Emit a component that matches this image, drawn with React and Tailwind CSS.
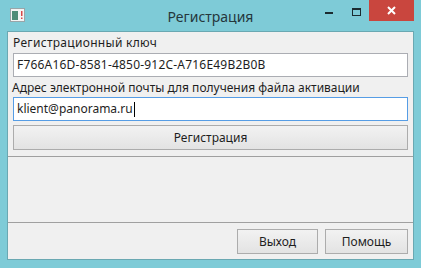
import React from 'react';

const font = { fontFamily: '"Noto Sans", "DejaVu Sans", sans-serif' };

const WinButton = ({ children, className = '' }) => (
  <button
    className={`h-[25px] border border-[#acacac] bg-gradient-to-b from-[#f2f2f2] to-[#e3e3e3] text-[12px] text-[#1e1e1e] ${className}`}
  >
    {children}
  </button>
);

export default function App() {
  return (
    <div className="w-[421px] h-[268px] bg-[#7ecbd7] flex flex-col" style={font}>
      {/* Заголовок окна */}
      <div className="h-[31px] flex items-start relative">
        <svg className="absolute left-[10px] top-[8px]" width="15" height="14" viewBox="0 0 15 14">
          <rect x="0.5" y="0.5" width="14" height="13" fill="#f4f4f4" stroke="#9aa5a8" />
          <rect x="2" y="3" width="6" height="9" fill="#4f8c78" />
          <rect x="11" y="3" width="1.5" height="5" fill="#d84848" />
          <rect x="11" y="9.5" width="1.5" height="1.5" fill="#d84848" />
        </svg>
        <div className="absolute left-0 right-0 top-[6px] text-center text-[14px] text-[#25373c]">Регистрация</div>
        <div className="absolute left-[325px] top-[12px] w-[8px] h-[2px] bg-[#1b2b30]" />
        <div className="absolute left-[352px] top-[8px] w-[9px] h-[8px] border border-[#1b2b30] border-t-2" />
        <div className="absolute left-[369px] top-0 w-[45px] h-[21px] bg-[#c9463e] flex items-center justify-center">
          <svg width="9" height="9" viewBox="0 0 9 9">
            <path d="M1 1 L8 8 M8 1 L1 8" stroke="#fff" strokeWidth="2" />
          </svg>
        </div>
      </div>

      {/* Клиентская область */}
      <div className="flex-1 ml-[7px] mr-[7px] mb-[8px] border border-[#6aa8b2] bg-[#f0f0f0] flex flex-col">
        <div className="pl-[4px] pr-[5px] pt-[3px] flex flex-col">
          <div className="text-[12px] leading-[16px] text-[#1e1e1e] pl-[1px] tracking-[0.3px]">Регистрационный ключ</div>
          <div className="mt-[2px] ml-[1px] h-[24px] bg-white border border-[#abadb3] flex items-center px-[3px] text-[12px] text-[#1e1e1e] tracking-[0.2px]">
            F766A16D-8581-4850-912C-A716E49B2B0B
          </div>
          <div className="mt-[3px] text-[12px] leading-[16px] text-[#1e1e1e]">Адрес электронной почты для получения файла активации</div>
          <div className="mt-[1px] ml-[1px] h-[24px] bg-white border border-[#569de5] flex items-center px-[3px] text-[12px] text-[#1e1e1e]">
            klient@panorama.ru<span className="w-[1px] h-[15px] bg-black ml-[1px]" />
          </div>
          <WinButton className="mt-[4px] ml-[1px] h-[24px]">Регистрация</WinButton>
        </div>
        <div className="mt-[6px] border-t border-[#a0a0a0] flex-1" />
        <div className="h-[37px] border-t border-[#a0a0a0] bg-[#f0f0f0] flex justify-end items-start gap-[7px] pt-[6px] pr-[5px]">
          <WinButton className="w-[81px]">Выход</WinButton>
          <WinButton className="w-[83px]">Помощь</WinButton>
        </div>
      </div>
    </div>
  );
}
